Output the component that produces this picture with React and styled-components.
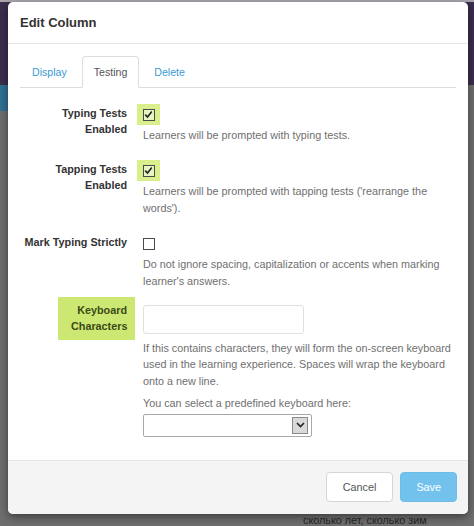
import styled, { createGlobalStyle } from "styled-components";

const GlobalStyle = createGlobalStyle`
  html, body {
    margin: 0;
    padding: 0;
  }
  body {
    width: 474px;
    height: 526px;
    overflow: hidden;
    background:
      linear-gradient(90deg, #2f6f93 0 8px, transparent 8px) 0 85px / 100% 26px no-repeat,
      linear-gradient(#a9a7ad 0 2px, #3b2d4d 2px 85px, #6e6e6e 85px);
    font-family: "Liberation Sans", Arial, sans-serif;
  }
`;

const Page = styled.div`
  padding: 2px 6px 0 8px;
`;

const Modal = styled.div`
  width: 460px;
  height: 512px;
  background: #fff;
  border-radius: 5px;
  box-shadow: 0 3px 9px rgba(0, 0, 0, 0.45);
  display: flex;
  flex-direction: column;
  overflow: hidden;
`;

const Header = styled.div`
  height: 41px;
  padding: 0 12px;
  display: flex;
  align-items: center;
  border-bottom: 1px solid #e5e5e5;
`;

const Title = styled.h4`
  margin: 0;
  font-size: 13px;
  font-weight: bold;
  color: #333;
`;

const Body = styled.div`
  flex: 1;
  padding: 12px 12px 0;
`;

const Tabs = styled.ul`
  list-style: none;
  margin: 0 0 16px;
  padding: 0;
  display: flex;
  border-bottom: 1px solid #ddd;
  height: 31px;
`;

const Tab = styled.li`
  margin: 0 3px -1px 0;
  padding: 0 11px;
  display: flex;
  align-items: center;
  font-size: 10.6px;
  color: ${(p) => (p.$active ? "#555" : "#3a9bd6")};
  background: ${(p) => (p.$active ? "#fff" : "transparent")};
  border: 1px solid ${(p) => (p.$active ? "#ddd" : "transparent")};
  border-bottom-color: transparent;
  border-radius: 4px 4px 0 0;
`;

const Row = styled.div`
  display: grid;
  grid-template-columns: 107px 1fr;
  column-gap: 16px;
  margin-bottom: ${(p) => p.$gap ?? 17}px;
`;

const Label = styled.div`
  justify-self: end;
  text-align: right;
  font-size: 10.8px;
  font-weight: bold;
  line-height: 15.5px;
  color: #333;
  padding-top: 2px;
  ${(p) =>
    p.$highlight &&
    `
    background: #cce872;
    color: #3d4a1a;
    padding: 6px 8px 6px 13px;
    margin: -8px -8px 0 0;
    width: 56px;
    height: 31px;
  `}
`;

const Control = styled.div`
  display: flex;
  flex-direction: column;
  align-items: flex-start;
`;

const CheckWrap = styled.div`
  height: 21px;
  width: 23px;
  margin-left: -6px;
  display: flex;
  align-items: center;
  justify-content: center;
  background: ${(p) => (p.$highlight ? "#d9ef8c" : "transparent")};
`;

const Box = styled.span`
  width: 10px;
  height: 10px;
  border: 1px solid #4a4a4a;
  background: ${(p) => (p.$checked ? "#e8f5c0" : "#fff")};
  display: flex;
  align-items: center;
  justify-content: center;
`;

const Help = styled.p`
  margin: ${(p) => p.$top ?? 2}px 0 0;
  font-size: 10.8px;
  line-height: 16.4px;
  color: #6f6f6f;
`;

const TextInput = styled.div`
  width: 159px;
  height: 27px;
  border: 1px solid #e0e0e0;
  border-radius: 3px;
`;

const SelectBox = styled.div`
  width: 164px;
  height: 21px;
  border: 1px solid #a9a9a9;
  border-radius: 2px;
  margin-top: 2px;
  display: flex;
  justify-content: flex-end;
  align-items: center;
  padding-right: 3px;
`;

const Arrow = styled.span`
  width: 14px;
  height: 15px;
  background: #d9d9d9;
  border: 1px solid #8a8a8a;
  display: flex;
  align-items: center;
  justify-content: center;
`;

const Footer = styled.div`
  height: 51px;
  border-top: 1px solid #e5e5e5;
  background: #f4f4f4;
  display: flex;
  justify-content: flex-end;
  align-items: center;
  gap: 7px;
  padding: 0 11px 2px 0;
`;

const Button = styled.button`
  height: 30px;
  padding: 0 ${(p) => (p.$primary ? 15 : 16)}px;
  border-radius: 4px;
  font-family: inherit;
  font-size: 10.8px;
  border: 1px solid ${(p) => (p.$primary ? "#6dbde9" : "#d6d6d6")};
  background: ${(p) => (p.$primary ? "#73c2ee" : "#fff")};
  color: ${(p) => (p.$primary ? "#fff" : "#555")};
`;

const Under = styled.div`
  padding: 0 0 0 295px;
  font-size: 10.8px;
  color: #1f1f1f;
`;

function Checkbox({ checked, highlight }) {
  return (
    <CheckWrap $highlight={highlight}>
      <Box $checked={checked}>
        {checked && (
          <svg width="9" height="9" viewBox="0 0 9 9">
            <path d="M1.2 4.6 L3.5 7 L7.8 1.4" fill="none" stroke="#222" strokeWidth="1.6" />
          </svg>
        )}
      </Box>
    </CheckWrap>
  );
}

export default function App() {
  return (
    <>
      <GlobalStyle />
      <Page>
        <Modal>
          <Header>
            <Title>Edit Column</Title>
          </Header>
          <Body>
            <Tabs>
              <Tab>Display</Tab>
              <Tab $active>Testing</Tab>
              <Tab>Delete</Tab>
            </Tabs>

            <Row>
              <Label>
                Typing Tests
                <br />
                Enabled
              </Label>
              <Control>
                <Checkbox checked highlight />
                <Help>Learners will be prompted with typing tests.</Help>
              </Control>
            </Row>

            <Row>
              <Label>
                Tapping Tests
                <br />
                Enabled
              </Label>
              <Control>
                <Checkbox checked highlight />
                <Help>Learners will be prompted with tapping tests ('rearrange the words').</Help>
              </Control>
            </Row>

            <Row $gap={16}>
              <Label>Mark Typing Strictly</Label>
              <Control>
                <Checkbox />
                <Help>Do not ignore spacing, capitalization or accents when marking learner's answers.</Help>
              </Control>
            </Row>

            <Row $gap={0}>
              <Label $highlight>
                Keyboard
                <br />
                Characters
              </Label>
              <Control>
                <TextInput />
                <Help $top={6}>
                  If this contains characters, they will form the on-screen keyboard used in the learning
                  experience. Spaces will wrap the keyboard onto a new line.
                </Help>
                <Help $top={6}>You can select a predefined keyboard here:</Help>
                <SelectBox>
                  <Arrow>
                    <svg width="9" height="6" viewBox="0 0 9 6">
                      <path d="M1 1 L4.5 4.5 L8 1" fill="none" stroke="#222" strokeWidth="1.6" />
                    </svg>
                  </Arrow>
                </SelectBox>
              </Control>
            </Row>
          </Body>
          <Footer>
            <Button>Cancel</Button>
            <Button $primary>Save</Button>
          </Footer>
        </Modal>
        <Under>сколько лет, сколько зим</Under>
      </Page>
    </>
  );
}
